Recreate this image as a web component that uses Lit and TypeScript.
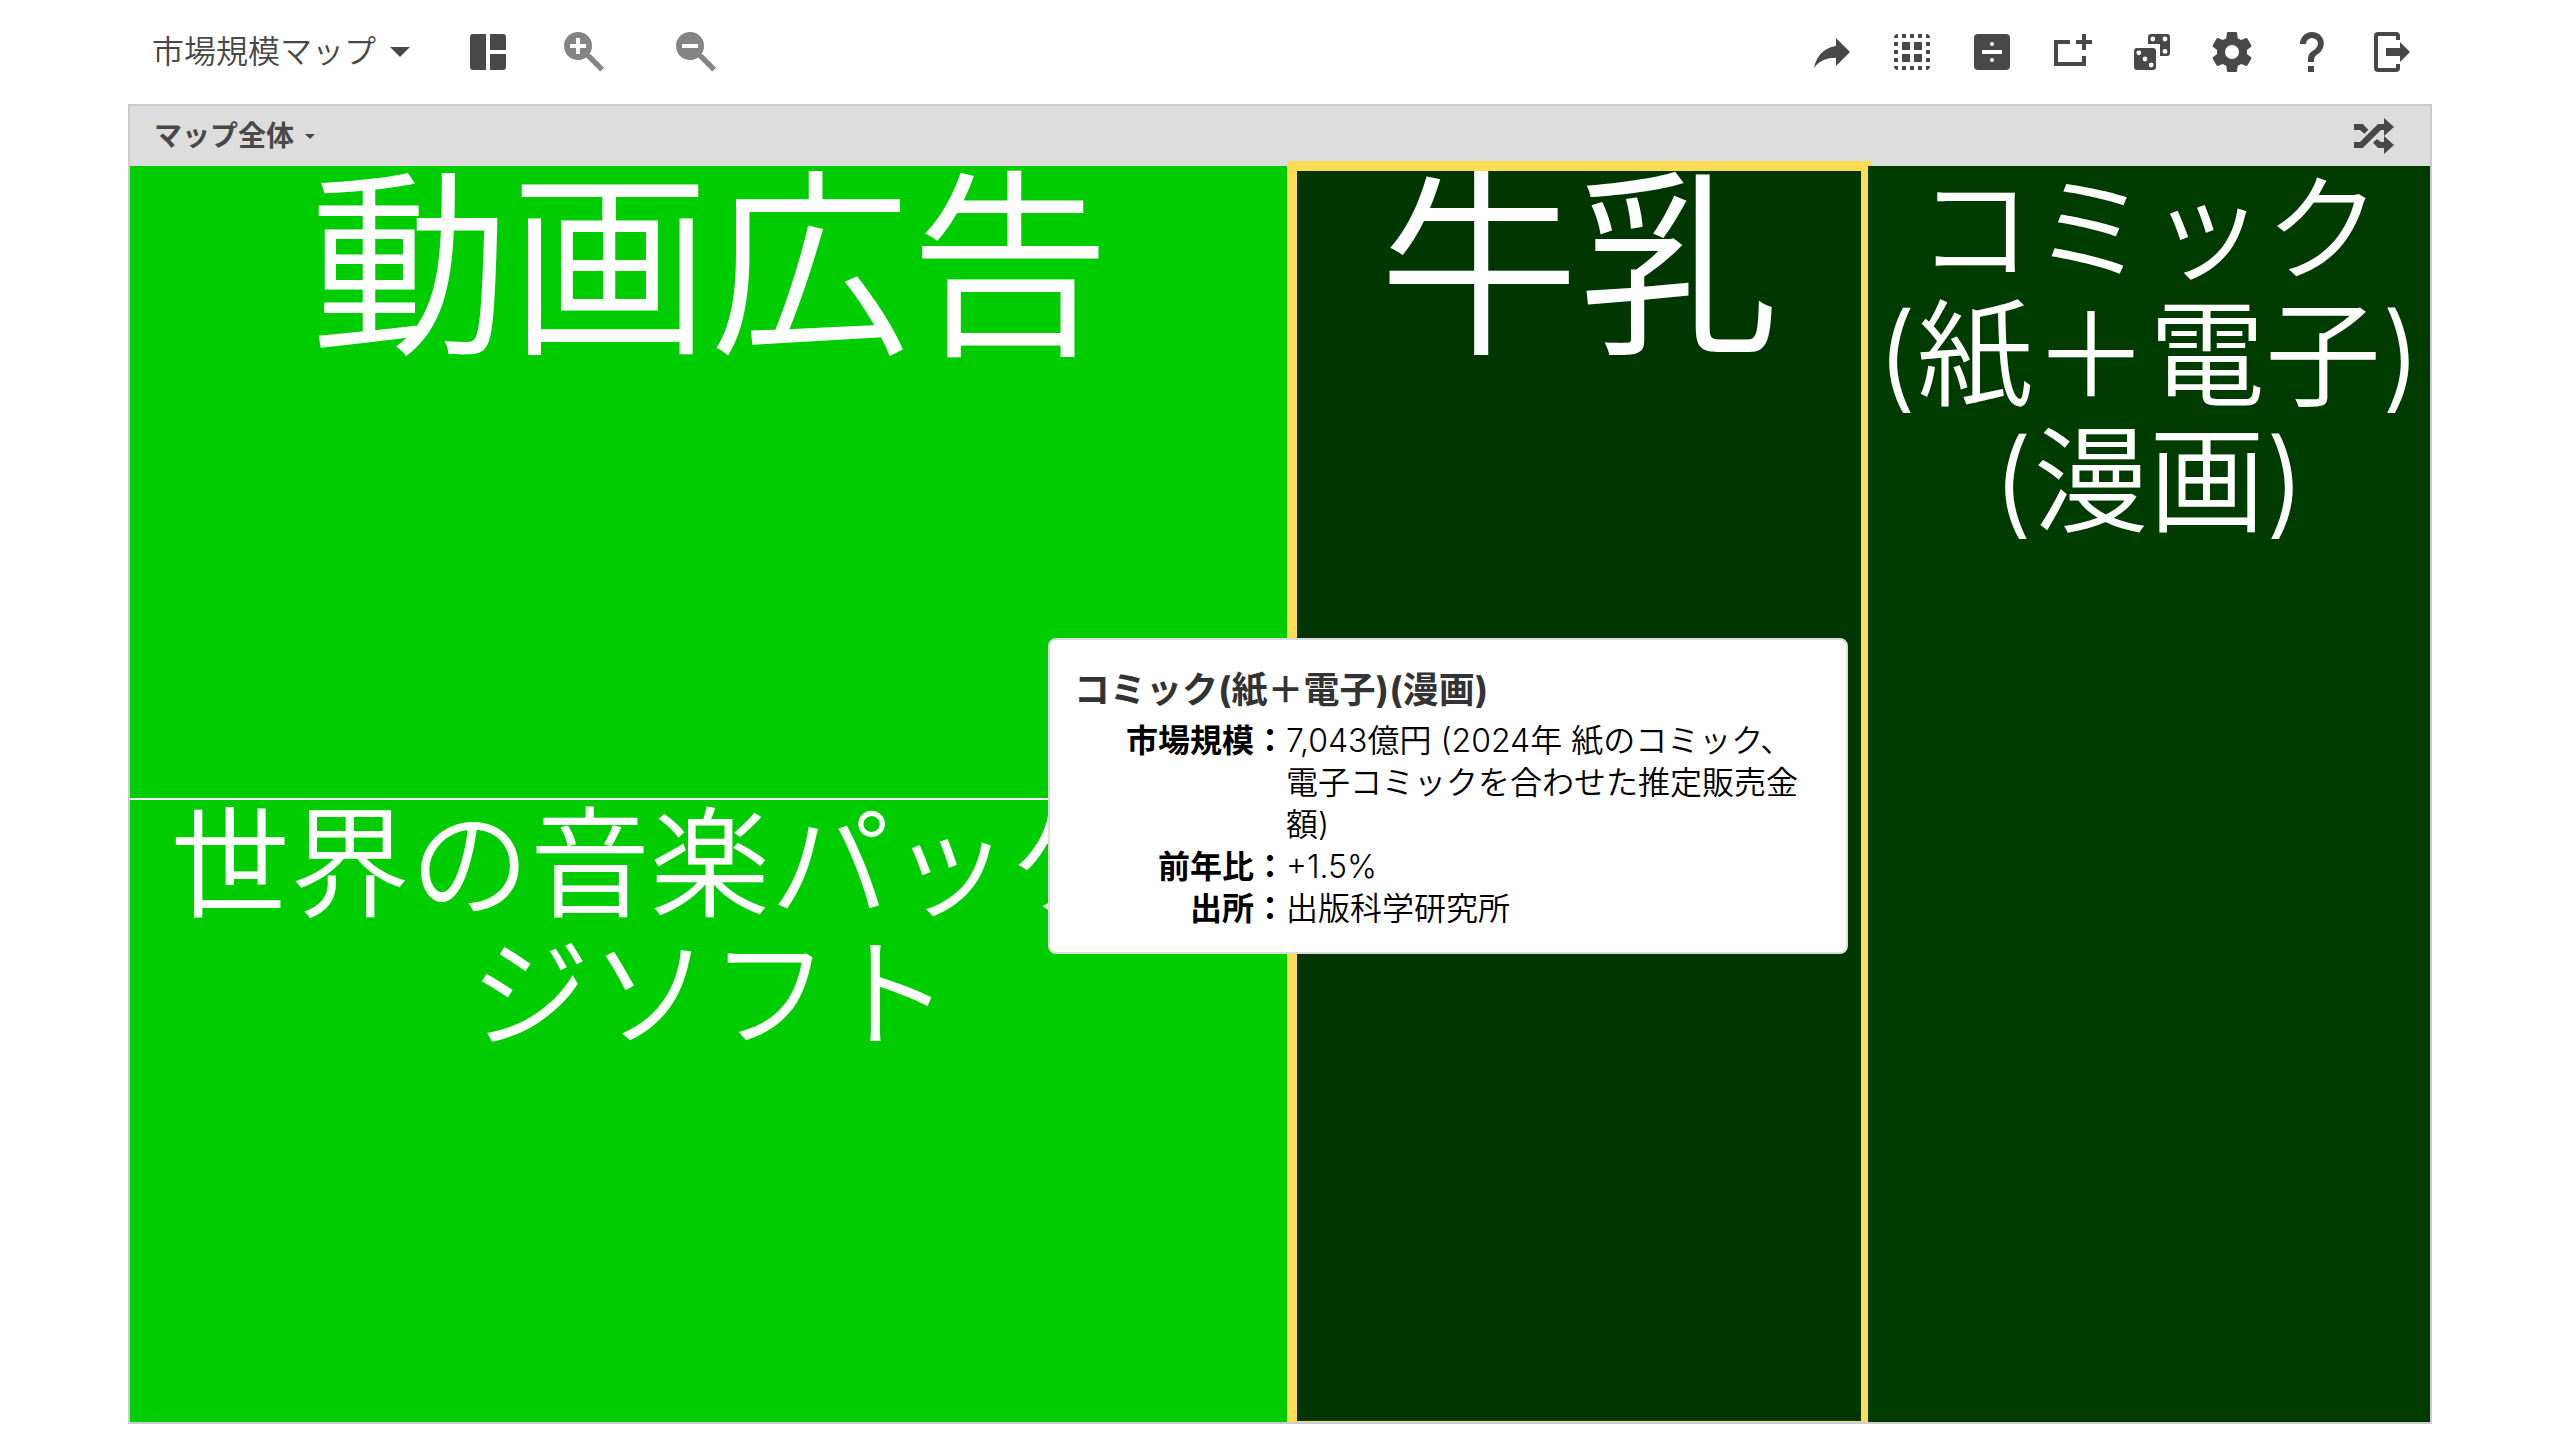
import { LitElement, html, css, svg } from "lit";
import { customElement } from "lit/decorators.js";

const icons = {
  layout: svg`<path d="M11 21H4.5A1.5 1.5 0 0 1 3 19.500V4.500A1.500 1.500 0 0 1 4.500 3H11zM13 21h6.500a1.500 1.500 0 0 0 1.500-1.500V13h-8zM21 11V4.500A1.500 1.500 0 0 0 19.500 3H13v8z"/>`,
  share: svg`<path d="M21 12 14 5v4C7 10 4 15 3 20c2.500-3.500 6-5.100 11-5.100V19z"/>`,
  select: svg`<path d="M5 3v2H3a2 2 0 0 1 2-2zM19 3v2h2a2 2 0 0 0-2-2zM5 21v-2H3a2 2 0 0 0 2 2zM19 21v-2h2a2 2 0 0 1-2 2zM7 3h2v2H7zM11 3h2v2h-2zM15 3h2v2h-2zM7 19h2v2H7zM11 19h2v2h-2zM15 19h2v2h-2zM3 7h2v2H3zM3 11h2v2H3zM3 15h2v2H3zM19 7h2v2h-2zM19 11h2v2h-2zM19 15h2v2h-2zM7 7h4v4H7zM13 7h4v4h-4zM7 13h4v4H7zM13 13h4v4h-4z"/>`,
  divide: svg`<path fill-rule="evenodd" d="M5 3h14a2 2 0 0 1 2 2v14a2 2 0 0 1-2 2H5a2 2 0 0 1-2-2V5a2 2 0 0 1 2-2zM7 11v2h10v-2zM12 7a1 1 0 1 0 0 2 1 1 0 0 0 0-2zM12 15a1 1 0 1 0 0 2 1 1 0 0 0 0-2z"/>`,
  add: svg`<path d="M3 6h8v2H5v9h12v-3h2v5H3zM17 3h2v3h3v2h-3v3h-2V8h-3V6h3z"/>`,
  dice: svg`<path fill-rule="evenodd" d="M11.500 3h8A1.500 1.500 0 0 1 21 4.500v8a1.500 1.500 0 0 1-1.500 1.500H16V8h-6V4.500A1.500 1.500 0 0 1 11.500 3zM12.400 4.300a1.200 1.200 0 1 0 0 2.400 1.200 1.200 0 0 0 0-2.400zM18.500 4.300a1.200 1.200 0 1 0 0 2.400 1.200 1.200 0 0 0 0-2.400zM18.500 10.500a1.200 1.200 0 1 0 0 2.400 1.200 1.200 0 0 0 0-2.400zM4.500 10h8a1.500 1.500 0 0 1 1.500 1.500v8a1.500 1.500 0 0 1-1.500 1.500h-8A1.500 1.500 0 0 1 3 19.500v-8A1.500 1.500 0 0 1 4.500 10zM5.400 11.200a1.200 1.200 0 1 0 0 2.400 1.200 1.200 0 0 0 0-2.400zM8.500 14.300a1.200 1.200 0 1 0 0 2.400 1.200 1.200 0 0 0 0-2.400zM11.600 17.300a1.200 1.200 0 1 0 0 2.400 1.200 1.200 0 0 0 0-2.400z"/>`,
  settings: svg`<path d="M12,15.5A3.5,3.5 0 0,1 8.5,12A3.5,3.5 0 0,1 12,8.5A3.5,3.5 0 0,1 15.5,12A3.5,3.5 0 0,1 12,15.5M19.43,12.97C19.47,12.65 19.5,12.33 19.5,12C19.5,11.67 19.47,11.34 19.43,11L21.54,9.37C21.73,9.22 21.78,8.95 21.66,8.73L19.66,5.27C19.54,5.05 19.27,4.96 19.05,5.05L16.56,6.05C16.04,5.66 15.5,5.32 14.87,5.07L14.5,2.42C14.46,2.18 14.25,2 14,2H10C9.75,2 9.54,2.18 9.5,2.42L9.13,5.07C8.5,5.32 7.96,5.66 7.44,6.05L4.95,5.05C4.73,4.96 4.46,5.05 4.34,5.27L2.34,8.73C2.21,8.95 2.27,9.22 2.46,9.37L4.57,11C4.53,11.34 4.5,11.67 4.5,12C4.5,12.33 4.53,12.65 4.57,12.97L2.46,14.63C2.27,14.78 2.21,15.05 2.34,15.27L4.34,18.73C4.46,18.95 4.73,19.03 4.95,18.95L7.44,17.94C7.96,18.34 8.5,18.68 9.13,18.93L9.5,21.58C9.54,21.82 9.75,22 10,22H14C14.25,22 14.46,21.82 14.5,21.58L14.87,18.93C15.5,18.67 16.04,18.34 16.56,17.94L19.05,18.95C19.27,19.03 19.54,18.95 19.66,18.73L21.66,15.27C21.78,15.05 21.73,14.78 21.54,14.63L19.43,12.97Z"/>`,
  help: svg`<path d="M10,19H13V22H10V19M12,2C17.35,2.22 19.68,7.62 16.5,11.67C15.67,12.67 14.33,13.33 13.67,14.17C13,15 13,16 13,17H10C10,15.33 10,13.92 10.67,12.92C11.33,11.92 12.67,11.33 13.5,10.67C15.92,8.43 15.32,5.26 12,5A3,3 0 0,0 9,8H6A6,6 0 0,1 12,2Z"/>`,
  exit: svg`<path d="M5 2h9a2 2 0 0 1 2 2v2h-2V4H5v16h9v-2h2v2a2 2 0 0 1-2 2H5a2 2 0 0 1-2-2V4a2 2 0 0 1 2-2zM9 10h7V7l5 5-5 5v-3H9z"/>`,
};

const actions: { label: string; icon: unknown }[] = [
  { label: "共有", icon: icons.share },
  { label: "選択", icon: icons.select },
  { label: "分割", icon: icons.divide },
  { label: "追加", icon: icons.add },
  { label: "ランダム", icon: icons.dice },
  { label: "設定", icon: icons.settings },
  { label: "ヘルプ", icon: icons.help },
  { label: "ログアウト", icon: icons.exit },
];

const details = [
  {
    term: "市場規模：",
    value: "7,043億円 (2024年 紙のコミック、電子コミックを合わせた推定販売金額)",
  },
  { term: "前年比：", value: "+1.5%" },
  { term: "出所：", value: "出版科学研究所" },
];

@customElement("app-root")
export class AppRoot extends LitElement {
  static styles = css`
    :host {
      display: flex;
      flex-direction: column;
      box-sizing: border-box;
      min-height: 100vh;
      padding: 0 5% 16px;
      background: #fff;
      color: #484848;
      font-family: Inter, "Noto Sans CJK JP", sans-serif;
      font-size: 32px;
      font-weight: 350;
    }
    button {
      display: flex;
      align-items: center;
      padding: 0;
      border: 0;
      background: none;
      color: inherit;
      font: inherit;
      cursor: pointer;
    }
    svg {
      display: block;
      fill: currentColor;
    }
    .toolbar {
      display: flex;
      align-items: center;
      height: 104px;
      padding: 0 16px 0 24px;
    }
    .icon {
      width: 48px;
      height: 48px;
    }
    .title {
      gap: 14px;
      line-height: 42px;
    }
    .tools {
      display: flex;
      align-items: center;
      margin-left: 54px;
    }
    .zooms {
      display: flex;
      gap: 72px;
      margin-left: 52px;
      color: #848484;
    }
    .actions {
      display: flex;
      gap: 32px;
      margin-left: auto;
    }
    .frame {
      display: flex;
      flex: 1;
      flex-direction: column;
      border: 2px solid #ccc;
    }
    .bar {
      display: flex;
      align-items: center;
      justify-content: space-between;
      height: 60px;
      padding: 0 36px 0 24px;
      background: #ddd;
    }
    .scope {
      gap: 11px;
      font-size: 28px;
      font-weight: 700;
      line-height: 42px;
    }
    .map {
      position: relative;
      display: grid;
      flex: 1;
      grid-template-columns: 1160fr 574fr 562fr;
      gap: 2px;
    }
    .column {
      display: grid;
      grid-template-rows: 632fr 622fr;
      gap: 2px;
    }
    .tile {
      position: relative;
      overflow-wrap: anywhere;
      color: #fff;
      text-align: center;
      font-size: 120px;
      line-height: 130px;
    }
    .huge {
      font-size: 200px;
      line-height: 200px;
    }
    .medium {
      font-size: 116px;
      line-height: 126px;
    }
    .rising {
      background: #00cd00;
    }
    .flat {
      background: #003700;
    }
    .mild {
      z-index: 2;
      background: #003c00;
    }
    .selected::after {
      content: "";
      position: absolute;
      z-index: 1;
      inset: -5px -5px 0 -5px;
      border: 10px solid #ffdc55;
      border-bottom-width: 1px;
    }
    .tooltip {
      position: absolute;
      z-index: 3;
      top: 472px;
      left: 918px;
      box-sizing: border-box;
      width: 800px;
      padding: 26px 24px 22px;
      border: 2px solid #ddd;
      border-radius: 8px;
      background: #fff;
      color: #000;
    }
    .heading {
      margin: 0 0 6px;
      color: #333;
      font-size: 36px;
      font-weight: 700;
      line-height: 48px;
    }
    .details {
      display: grid;
      grid-template-columns: 212px 1fr;
      margin: 0;
      line-height: 42px;
    }
    .term {
      font-weight: 700;
      text-align: right;
    }
    .value {
      margin: 0;
    }
  `;

  private icon(shape: unknown) {
    return html`<svg class="icon" viewBox="0 0 24 24" aria-hidden="true">${shape}</svg>`;
  }

  private zoomIcon(sign: string) {
    return html`<svg width="40" height="40" viewBox="0 0 40 40" aria-hidden="true">
      <path fill-rule="evenodd" d="M14 0a14 14 0 1 0 0 28 14 14 0 0 0 0-28z${sign}" />
      <path d="M22 25l3-3 2.500 1L40 35.700 36.300 39.500 23.500 26.800z" />
    </svg>`;
  }

  render() {
    return html`
      <header class="toolbar">
        <button class="title">
          市場規模マップ
          <svg width="20" height="10" viewBox="0 0 20 10" aria-hidden="true"><path d="M0 0h20L10 10z" /></svg>
        </button>
        <div class="tools">
          <button aria-label="レイアウト">${this.icon(icons.layout)}</button>
          <div class="zooms">
            <button aria-label="拡大">${this.zoomIcon("M12 6h4v6h6v4h-6v6h-4v-6H6v-4h6z")}</button>
            <button aria-label="縮小">${this.zoomIcon("M6 12h16v4H6z")}</button>
          </div>
        </div>
        <nav class="actions">
          ${actions.map((a) => html`<button aria-label=${a.label}>${this.icon(a.icon)}</button>`)}
        </nav>
      </header>
      <main class="frame">
        <div class="bar">
          <button class="scope">
            マップ全体
            <svg width="10" height="5" viewBox="0 0 10 5" aria-hidden="true"><path d="M0 0h10L5 5z" /></svg>
          </button>
          <button aria-label="シャッフル">
            <svg width="40" height="36" viewBox="0 0 40 36" aria-hidden="true">
              <path d="M0 6h8.700l5.700 5.700-4 4L6 12H0zM0 24h6L24 6h6V0l10 9-10 9v-6h-3L8.700 30H0zM23 21l4 3h3v-6l10 9-10 9v-6h-6l-5-5.300z" />
            </svg>
          </button>
        </div>
        <section class="map">
          <div class="column">
            <div class="tile huge rising">動画広告</div>
            <div class="tile rising">世界の音楽パッケージソフト</div>
          </div>
          <div class="tile huge flat selected">牛乳</div>
          <div class="tile medium mild">コミック(紙＋電子)(漫画)</div>
          <aside class="tooltip" role="tooltip">
            <h2 class="heading">コミック(紙＋電子)(漫画)</h2>
            <dl class="details">
              ${details.map((d) => html`<dt class="term">${d.term}</dt><dd class="value">${d.value}</dd>`)}
            </dl>
          </aside>
        </section>
      </main>
    `;
  }
}
